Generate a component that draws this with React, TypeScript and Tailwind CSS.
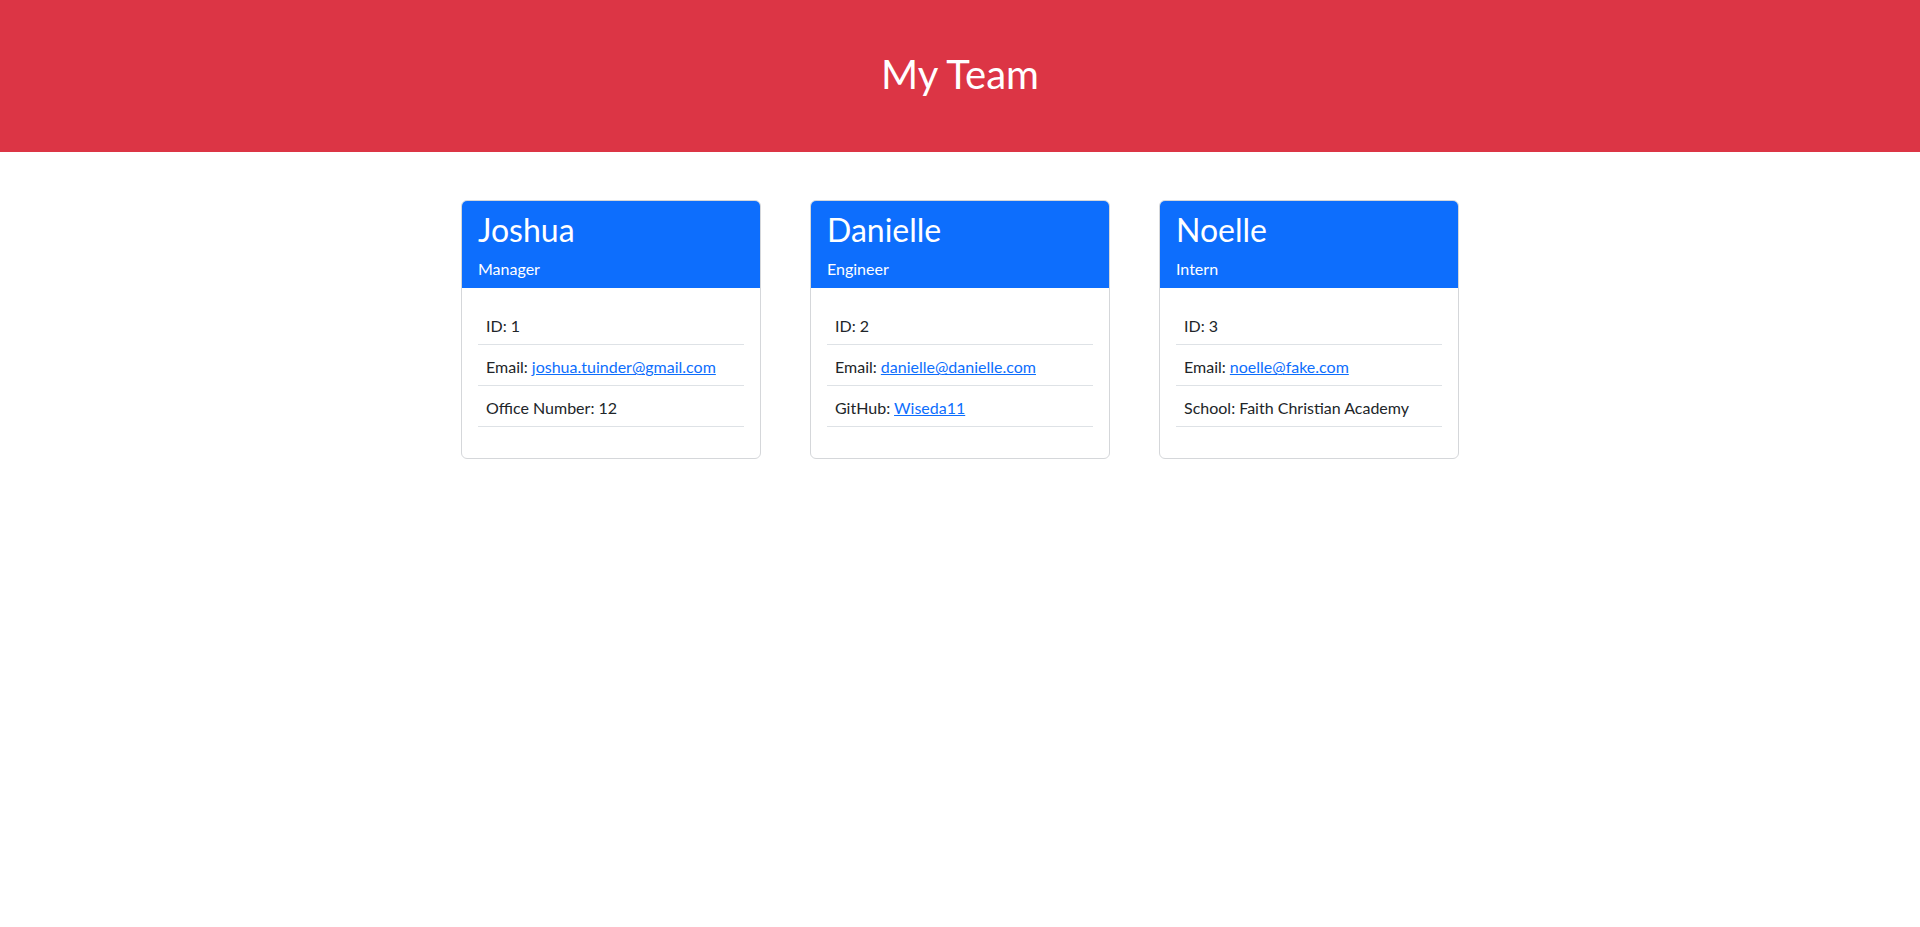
import React from 'react';

interface Member {
  name: string;
  role: string;
  id: number;
  email: string;
  extraLabel: string;
  extraValue: string;
  extraLink?: boolean;
}

const team: Member[] = [
  { name: 'Joshua', role: 'Manager', id: 1, email: 'joshua.tuinder@gmail.com', extraLabel: 'Office Number', extraValue: '12' },
  { name: 'Danielle', role: 'Engineer', id: 2, email: 'danielle@danielle.com', extraLabel: 'GitHub', extraValue: 'Wiseda11', extraLink: true },
  { name: 'Noelle', role: 'Intern', id: 3, email: 'noelle@fake.com', extraLabel: 'School', extraValue: 'Faith Christian Academy' },
];

const MemberCard: React.FC<{ m: Member }> = ({ m }) => (
  <div className="w-[300px] border border-[#d5d7da] rounded-[6px] overflow-hidden bg-white">
    <div className="bg-[#0d6efd] text-white px-4 pt-[10px] pb-[7px]">
      <h2 className="text-[32px] leading-[1.2] font-normal mb-2">{m.name}</h2>
      <h4 className="text-base leading-6 font-normal">{m.role}</h4>
    </div>
    <div className="px-4 pt-4 pb-[31px]">
      <ul>
        <li className="px-2 pt-[10px] pb-[6px] leading-6 border-b border-[#dee2e6]">ID: {m.id}</li>
        <li className="px-2 pt-[10px] pb-[6px] leading-6 border-b border-[#dee2e6]">
          Email: <a href="#" className="text-[#0d6efd] underline">{m.email}</a>
        </li>
        <li className="px-2 pt-[10px] pb-[6px] leading-6 border-b border-[#dee2e6]">
          {m.extraLabel}:{' '}
          {m.extraLink ? <a href="#" className="text-[#0d6efd] underline">{m.extraValue}</a> : m.extraValue}
        </li>
      </ul>
    </div>
  </div>
);

const App: React.FC = () => {
  return (
    <div className="min-h-screen bg-white text-[#212529] font-['Lato',sans-serif] text-base">
      <header className="bg-[#dc3545] h-[152px] pt-[50px] text-center">
        <h1 className="text-white text-[40px] leading-[1.2] font-normal">My Team</h1>
      </header>
      <main className="flex justify-center gap-[49px] pt-12">
        {team.map((m) => (
          <MemberCard key={m.id} m={m} />
        ))}
      </main>
    </div>
  );
};

export default App;
